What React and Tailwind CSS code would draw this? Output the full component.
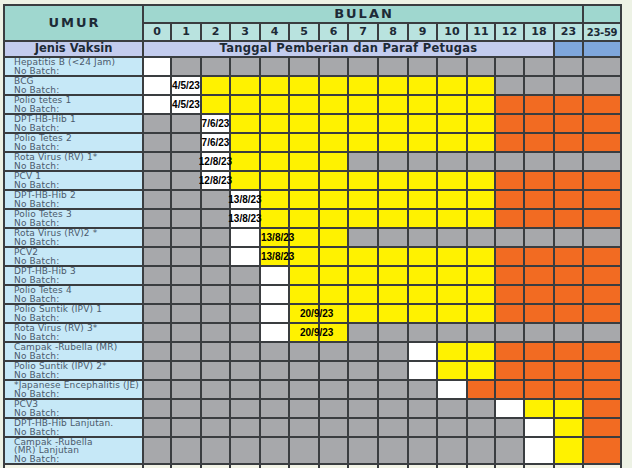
import React from "react";

const MONTHS = ["0", "1", "2", "3", "4", "5", "6", "7", "8", "9", "10", "11", "12", "18", "23", "23-59"];

const ROWS = [
  { label: ["Hepatitis B (<24 Jam)", "No Batch:"], cells: "wggggggggggggggg" },
  { label: ["BCG", "No Batch:"], cells: "wwyyyyyyyyyygggg", date: { col: 1, text: "4/5/23", align: "c" } },
  { label: ["Polio tetes 1", "No Batch:"], cells: "wwyyyyyyyyyyoooo", date: { col: 1, text: "4/5/23", align: "c" } },
  { label: ["DPT-HB-Hib 1", "No Batch:"], cells: "ggwyyyyyyyyyoooo", date: { col: 2, text: "7/6/23", align: "c" } },
  { label: ["Polio Tetes 2", "No Batch:"], cells: "ggwyyyyyyyyyoooo", date: { col: 2, text: "7/6/23", align: "c" } },
  { label: ["Rota Virus (RV) 1*", "No Batch:"], cells: "ggwyyyyggggggggg", date: { col: 2, text: "12/8/23", align: "c" } },
  { label: ["PCV 1", "No Batch:"], cells: "ggwyyyyyyyyyoooo", date: { col: 2, text: "12/8/23", align: "c" } },
  { label: ["DPT-HB-Hib 2", "No Batch:"], cells: "gggwyyyyyyyyoooo", date: { col: 3, text: "13/8/23", align: "c" } },
  { label: ["Polio Tetes 3", "No Batch:"], cells: "gggwyyyyyyyyoooo", date: { col: 3, text: "13/8/23", align: "c" } },
  { label: ["Rota Virus (RV)2 *", "No Batch:"], cells: "gggwyyyggggggggg", date: { col: 4, text: "13/8/23", align: "l0" } },
  { label: ["PCV2", "No Batch:"], cells: "gggwyyyyyyyyoooo", date: { col: 4, text: "13/8/23", align: "l0" } },
  { label: ["DPT-HB-Hib 3", "No Batch:"], cells: "ggggwyyyyyyyoooo" },
  { label: ["Polio Tetes 4", "No Batch:"], cells: "ggggwyyyyyyyoooo" },
  { label: ["Polio Suntik (IPV) 1", "No Batch:"], cells: "ggggwyyyyyyyoooo", date: { col: 5, text: "20/9/23", align: "l10" } },
  { label: ["Rota Virus (RV) 3*", "No Batch:"], cells: "ggggwyyggggggggg", date: { col: 5, text: "20/9/23", align: "l10" } },
  { label: ["Campak -Rubella (MR)", "No Batch:"], cells: "gggggggggwyyoooo" },
  { label: ["Polio Suntik (IPV) 2*", "No Batch:"], cells: "gggggggggwyyoooo" },
  { label: ["*Japanese Encephalitis (JE)", "No Batch:"], cells: "ggggggggggwooooo" },
  { label: ["PCV3", "No Batch:"], cells: "ggggggggggggwyyo" },
  { label: ["DPT-HB-Hib Lanjutan.", "No Batch:"], cells: "gggggggggggggwyo" },
  { label: ["Campak -Rubella", "(MR) Lanjutan", "No Batch:"], cells: "gggggggggggggwyo" },
];

const BG = {
  w: "bg-white",
  g: "bg-[#a7a8ab]",
  y: "bg-[#fff200]",
  o: "bg-[#f26b22]",
};

const ALIGN = {
  c: "justify-center",
  l0: "justify-start pl-0",
  l10: "justify-start pl-[10px]",
};

function Cell({ kind, date }) {
  return (
    <div className={`${BG[kind]} flex items-center overflow-visible ${date ? ALIGN[date.align] : ""}`}>
      {date && (
        <span className="relative z-10 whitespace-nowrap text-[10px] leading-none font-bold text-black [font-family:'Liberation_Sans',Arial,sans-serif]">
          {date.text}
        </span>
      )}
    </div>
  );
}

export default function App() {
  return (
    <div className="w-[632px] h-[468px] overflow-hidden bg-[#edf2e5] pt-[4px] pl-[3px] [font-family:'DejaVu_Sans',Verdana,sans-serif]">
      <div className="grid w-max gap-[2px] p-[2px] bg-[#3a3d40] grid-cols-[137px_26px_28px_27px_28px_27px_28px_27px_28px_28px_27px_28px_26px_27px_28px_27px_36px] grid-rows-[16px_16px_14px_repeat(20,17px)_25px_20px]">
        {/* Header */}
        <div className="row-span-2 bg-[#9fd7cf] flex items-center justify-center text-[13px] font-bold tracking-[2px] pl-[2px] text-[#1d2a36]">
          UMUR
        </div>
        <div className="col-span-15 bg-[#9fd7cf] flex items-center justify-center text-[13px] font-bold tracking-[2px] pl-[2px] text-[#1d2a36]">
          BULAN
        </div>
        <div className="bg-[#9fd7cf]" />
        {MONTHS.map((m) => (
          <div
            key={m}
            className={`bg-[#b9e3df] flex items-center justify-center font-bold text-[#1d2a36] whitespace-nowrap ${
              m === "23-59" ? "text-[10px] tracking-[-0.3px]" : "text-[11px]"
            }`}
          >
            {m}
          </div>
        ))}
        <div className="bg-[#c3ccee] flex items-center justify-center text-[11.5px] font-bold text-[#1d2a36]">
          Jenis Vaksin
        </div>
        <div className="col-span-14 bg-[#c3ccee] flex items-center justify-center text-[11.5px] font-bold tracking-[0.3px] text-[#1d2a36]">
          Tanggal Pemberian dan Paraf Petugas
        </div>
        <div className="bg-[#7fa7dc]" />
        <div className="bg-[#7fa7dc]" />

        {/* Data rows */}
        {ROWS.map((row, ri) => (
          <React.Fragment key={ri}>
            <div className="bg-[#c6e8f7] flex flex-col justify-center pl-[9px] text-[9px] leading-[8.5px] tracking-[0.15px] text-[#4b5a6c] whitespace-nowrap overflow-hidden">
              {row.label.map((l, i) => (
                <span key={i}>{l}</span>
              ))}
            </div>
            {row.cells.split("").map((k, ci) => (
              <Cell key={ci} kind={k} date={row.date && row.date.col === ci ? row.date : null} />
            ))}
          </React.Fragment>
        ))}

        {/* Trailing cream row */}
        <div className="bg-[#f3f4e7]" />
        {MONTHS.map((m) => (
          <div key={m} className="bg-[#f3f4e7]" />
        ))}
      </div>
    </div>
  );
}
